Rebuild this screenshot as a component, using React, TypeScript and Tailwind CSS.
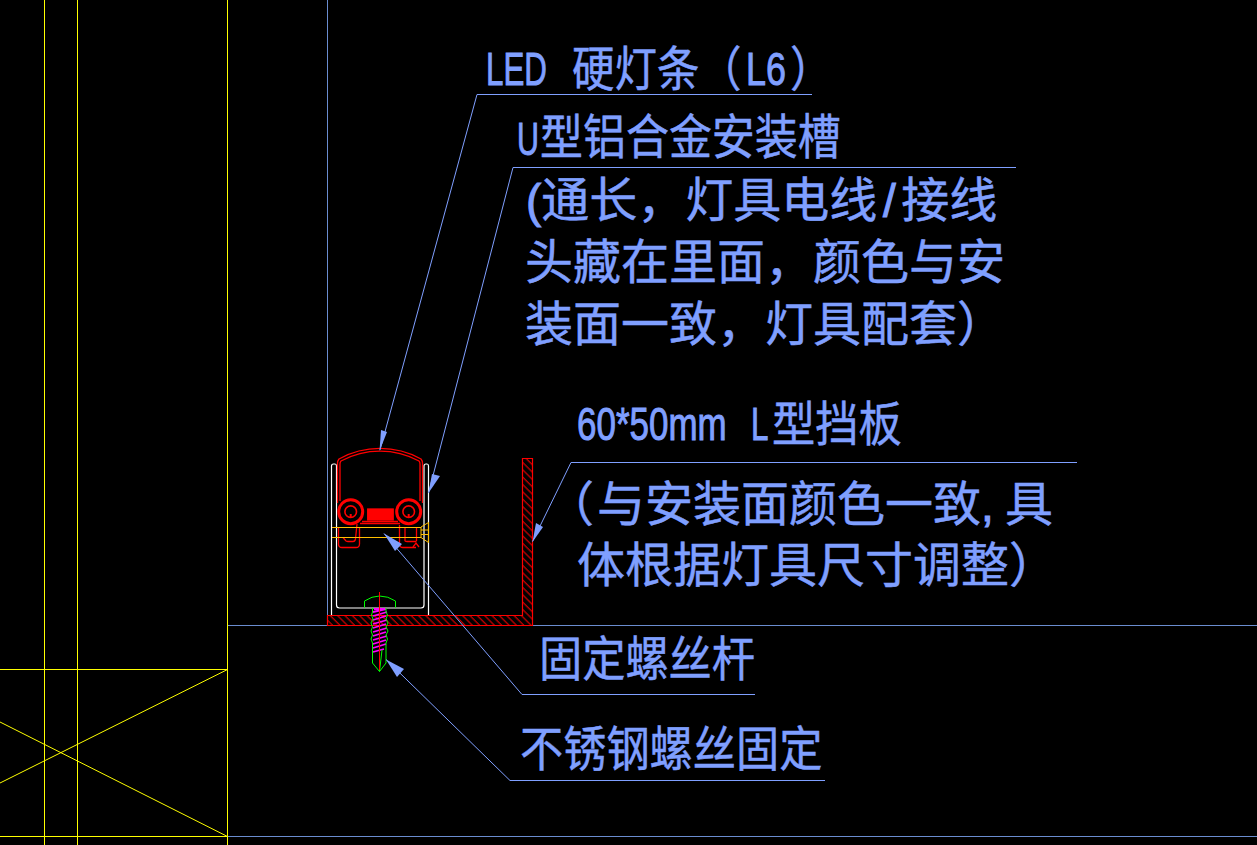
const label =
  "absolute origin-top-left whitespace-nowrap leading-none text-[#7f9fff] [-webkit-text-stroke:0.5px_#7f9fff]";
const latin = "font-['Liberation_Sans',sans-serif] text-[46px] [-webkit-text-stroke:1px_#7f9fff]";
const cjk = "font-['Noto_Sans_CJK_SC',sans-serif] text-[48px]";

function Drawing() {
  return (
    <svg className="absolute inset-0" width="1257" height="845" viewBox="0 0 1257 845" fill="none">
      <defs>
        <pattern id="hatch" width="5.2" height="5.2" patternUnits="userSpaceOnUse" patternTransform="rotate(-45)">
          <line x1="1" y1="0" x2="1" y2="5.2" stroke="#ff0000" strokeWidth="1" />
        </pattern>
      </defs>

      {/* wall / structure */}
      <g stroke="#ffff00" strokeWidth="1">
        <path d="M44.5 0V845M77.5 0V845M227.5 0V845M0 669.5H227.5M0 836.5H227.5" shapeRendering="crispEdges" />
        <path d="M227.5 669.5L0 783M227.5 836.5L0 722" />
      </g>
      <path d="M327.5 0V625.5M227.5 625.5H1257M227.5 836.5H1257" stroke="#6a8ccf" strokeWidth="1" shapeRendering="crispEdges" />

      {/* L bracket */}
      <path
        d="M327.5 615.5H522.5V458.5H532.5V625.5H327.5Z"
        fill="url(#hatch)"
        stroke="#ff0000"
        strokeWidth="1.2"
      />

      {/* U channel */}
      <path
        d="M331.5 615V466Q331.5 464 333.5 464H335Q336.5 464 336.5 466V605Q336.5 608 339.5 608H421Q424 608 424 605V466Q424 464 426 464H427Q428.5 464 428.5 466V615"
        stroke="#ffffff"
        strokeWidth="1.2"
      />

      {/* lamp housing */}
      <g stroke="#ff0000" strokeWidth="1.3">
        <path d="M337.5 503V463Q337.5 461 339 459A85 85 0 0 1 421 459Q422.5 461 422.5 463V503" />
        <path d="M340 501V464Q340 462 341 461A82 82 0 0 1 419 461Q420 462 420 464V501" />
        <circle cx="350.7" cy="511.7" r="12" strokeWidth="3" />
        <circle cx="408.7" cy="511.7" r="12" strokeWidth="3" />
        <circle cx="350.7" cy="511.7" r="5.8" strokeWidth="1.6" />
        <circle cx="408.7" cy="511.7" r="5.8" strokeWidth="1.6" />
        <path d="M350.7 517V514M408.7 517V514" strokeWidth="2" />
        <rect x="367.7" y="509" width="25.5" height="11" fill="#ff0000" />
        <path d="M362 521.5H398M360 523.5H400" />
        <path d="M338.5 527V544Q338.5 547.5 342 547.5H356Q359.5 547.5 359.5 544V527" />
        <path d="M343 537.5L346 541Q347 541.5 348 541.5H353Q355 541.5 355.5 539L357 524" />
        <path d="M399.5 525V544Q399.5 547.5 403 547.5H416" />
        <path d="M405 527V541Q405 541.5 407 541.5H416.5M416.5 527V541M413 547L416 543L419 547" />
      </g>

      {/* threaded rod and its countersunk head */}
      <g stroke="#ffbf00" strokeWidth="1">
        <path d="M331.5 527.5H421M331.5 537.5H421" shapeRendering="crispEdges" />
        <path d="M421 527L428.5 522.5V542.5L421 537.5Z" />
        <path d="M421 530H428M421 534.5H428" />
      </g>

      {/* fixing screw */}
      <g stroke="#ff00ff" strokeWidth="1.8">
        <path d="M374 609H385M373 612L386 609M373 616L387 612M373 620L386 616M373 624L387 620M373 628L386 624M373 632L387 628M373 636L386 632M373 640L387 636M373 644L386 640M373 648L386 644M373 652L384 649" />
      </g>
      <g stroke="#00ff00" strokeWidth="1">
        <path d="M364.5 607.5V601Q372 596 379.5 596Q388 596 395.5 601V607.5" />
        <path d="M372.5 608V612L371.5 615L373 619L371 623L372.5 627L371 631L372.5 635L371 639L372.5 643L372.5 663L379.5 671.5L386 663V643L387.5 639L386 635L388 631L386 627L388 623L386 619L387.5 615L386 612V608" />
        <path d="M379.5 671.5L382 650" />
      </g>
      <path d="M379.5 592V670" stroke="#ff0000" strokeWidth="1" />

      {/* leaders */}
      <g stroke="#7f9fff" strokeWidth="1">
        <path d="M812 94.5H477L380 450" />
        <path d="M1016 167.5H513L428.5 493" />
        <path d="M1077 462.5H571L532.5 541.5" />
        <path d="M755 694.5H522L384 533.5" />
        <path d="M825 780.5H510L386 659.5" />
      </g>
      <g fill="#7f9fff">
        <path d="M379.5 451L381 430L387 432Z" />
        <path d="M428.5 493L432 474L440 476Z" />
        <path d="M532.5 542L536 523L543 527Z" />
        <path d="M384 533.5L402 544L395 551Z" />
        <path d="M386 659.5L404 669L397 677Z" />
      </g>
    </svg>
  );
}

export default function App() {
  return (
    <div className="relative h-[845px] w-[1257px] overflow-hidden bg-black">
      <Drawing />

      <span className={`${label} ${latin} left-[486px] top-[46px] scale-x-[0.68]`}>LED</span>
      <span className={`${label} ${cjk} left-[572px] top-[41px] scale-x-[0.885]`}>硬灯条</span>
      <span className={`${label} ${cjk} left-[699px] top-[41px] scale-x-[0.885]`}>（</span>
      <span className={`${label} ${latin} left-[746px] top-[46px] scale-x-[0.78]`}>L6</span>
      <span className={`${label} ${cjk} left-[790px] top-[41px] scale-x-[0.885]`}>）</span>

      <span className={`${label} ${latin} left-[517px] top-[116px] scale-x-[0.66]`}>U</span>
      <span className={`${label} ${cjk} left-[540px] top-[109px] scale-x-[0.895]`}>型铝合金安装槽</span>

      <span className={`${label} ${cjk} left-[526px] top-[172px]`}>
        <span className={latin}>(</span>通长，灯具电线
        <span className={`${latin} inline-block w-[24px] text-center`}>/</span>接线
      </span>
      <span className={`${label} ${cjk} left-[525px] top-[234px]`}>头藏在里面，颜色与安</span>
      <span className={`${label} ${cjk} left-[525px] top-[296px]`}>装面一致，灯具配套）</span>

      <span className={`${label} ${latin} left-[577px] top-[401px] scale-x-[0.76]`}>60*50mm</span>
      <span className={`${label} ${latin} left-[751px] top-[401px] scale-x-[0.68]`}>L</span>
      <span className={`${label} ${cjk} left-[772px] top-[396px] scale-x-[0.9]`}>型挡板</span>

      <span className={`${label} ${cjk} left-[546px] top-[476px]`}>（</span>
      <span className={`${label} ${cjk} left-[597px] top-[476px]`}>
        与安装面颜色一致<span className={`${latin} inline-block w-[24px]`}>,</span>具
      </span>
      <span className={`${label} ${cjk} left-[577px] top-[537px]`}>体根据灯具尺寸调整）</span>

      <span className={`${label} ${cjk} left-[539px] top-[631px] scale-x-[0.9]`}>固定螺丝杆</span>
      <span className={`${label} ${cjk} left-[520px] top-[721px] scale-x-[0.9]`}>不锈钢螺丝固定</span>
    </div>
  );
}
